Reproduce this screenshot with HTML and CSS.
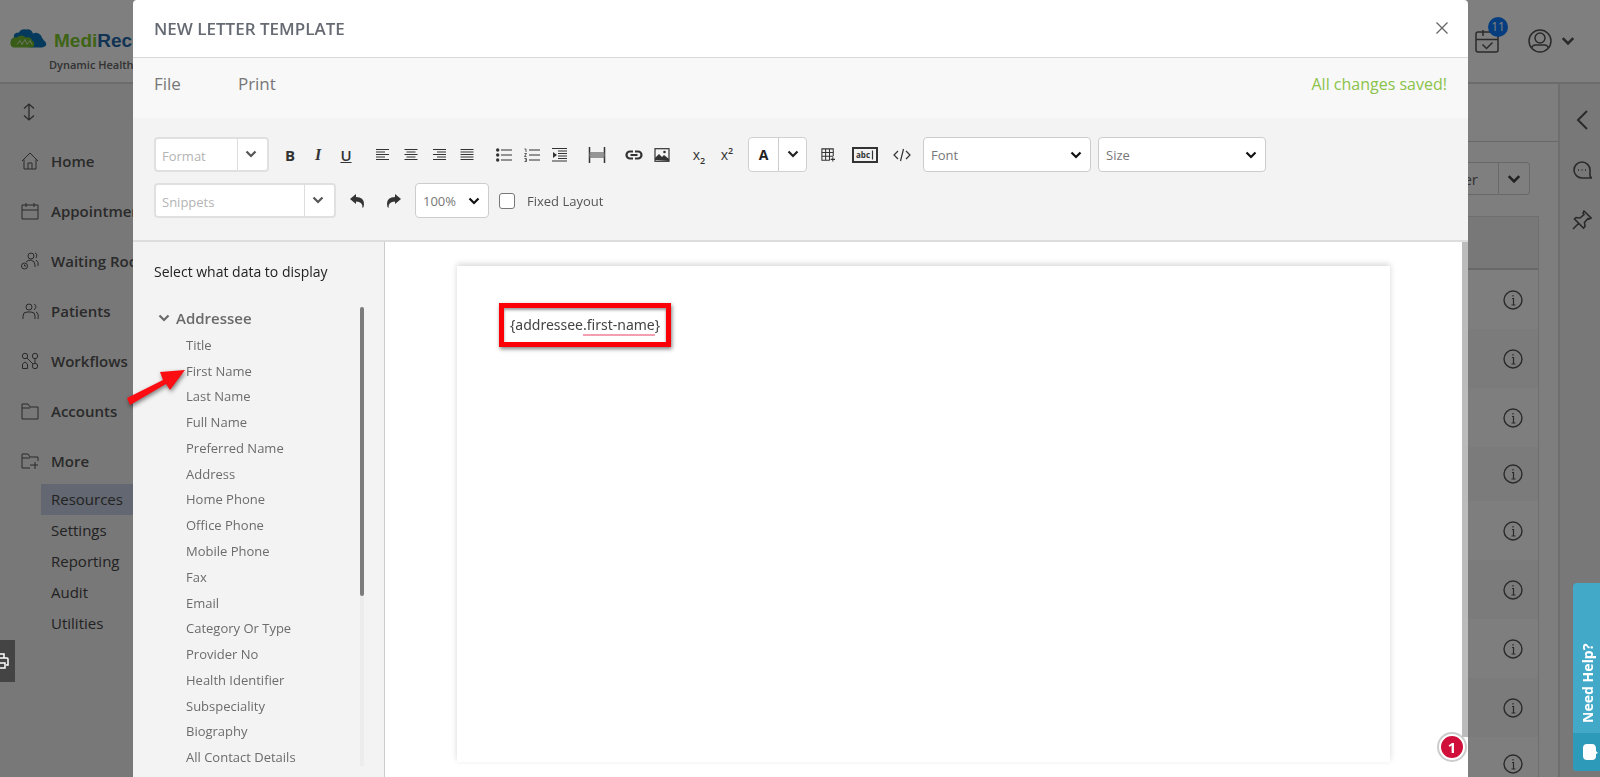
FILE: index.html
```html
<!DOCTYPE html>
<html lang="en">
<head>
<meta charset="utf-8">
<title>New Letter Template</title>
<link rel="stylesheet" href="styles.css">
</head>
<body>
<svg class="defs" width="0" height="0" aria-hidden="true">
  <symbol id="chev" viewBox="0 0 12 12"><path d="M1.5 3.5 6 8l4.500-4.500" fill="none" stroke="currentColor" stroke-width="2.200"/></symbol>
  <symbol id="info" viewBox="0 0 20 20"><circle cx="10" cy="10" r="9" fill="none" stroke="currentColor" stroke-width="1.400"/><path d="M9 8.500h1.500V15M8.500 15h4M10 5v1.500" fill="none" stroke="currentColor" stroke-width="1.200"/></symbol>
</svg>

<div class="app">
  <header class="topbar">
    <div class="brand">
      <svg class="cloud" viewBox="0 0 37 20"><path d="M2 17Q-1 11 4 9 3 4 9 4 11 0 16 1q5-1 7 4 5-2 8 2 1 3 3 5 4 3 1 6l-3 1H22Z" fill="#0a74b8"/><path d="M3 19Q-1 17 1 12q2-4 6-3 4-4 9 0 5-1 6 3 3 1 2 5l-1 2Z" fill="#72b82e"/><path d="m7 16 3-4 2 4 3-5 2 5 3-4 2 4" fill="none" stroke="#d5e8c5"/></svg>
      <span class="brand-name"><b class="green">Medi</b><b class="blue">Reco</b></span>
      <span class="tagline">Dynamic Health</span>
    </div>
    <div class="account">
      <button class="ghost tasks" aria-label="Tasks"><svg width="24" height="24" viewBox="0 0 24 24" fill="none" stroke="currentColor" stroke-width="1.500"><rect x="1" y="3" width="22" height="20" rx="2"/><path d="M1 10.500h22M8 1v6M7.500 15.500l4 4 6-6"/></svg><span class="count">11</span></button>
      <button class="ghost profile" aria-label="Profile"><svg width="24" height="24" viewBox="0 0 24 24" fill="none" stroke="currentColor" stroke-width="1.500"><circle cx="12" cy="12" r="11"/><circle cx="12" cy="9" r="5"/><path d="M3.500 19q1-3 4-3h9q3 0 4 3"/></svg><svg width="14" height="14"><use href="#chev"/></svg></button>
    </div>
  </header>
  <div class="body">
    <nav class="nav">
      <button class="ghost collapse" aria-label="Collapse"><svg width="12" height="18" viewBox="0 0 12 18" fill="none" stroke="currentColor" stroke-width="1.300"><path d="M6 1v16M1 5.500 6 1l5 4.500M1 12.500 6 17l5-4.500"/></svg></button>
      <a href="#"><svg viewBox="0 0 18 18"><path d="M1 9 9 1l8 8M3 7.500V17h12V7.500M7 17v-6h4v6"/></svg>Home</a>
      <a href="#"><svg viewBox="0 0 18 18"><path d="M1 3h16v14H1zM1 8h16M5 1v4M13 1v4"/></svg>Appointments</a>
      <a href="#"><svg viewBox="0 0 18 18"><circle cx="10" cy="4" r="3"/><circle cx="3.500" cy="14" r="3"/><path d="M5 10q2-2 5-2 4 1 4 5v2M14 1q3 1 1 5M15 8q3 2 2 6M3.500 12.500V14H5"/></svg>Waiting Room</a>
      <a href="#"><svg viewBox="0 0 18 18"><circle cx="8" cy="5" r="3"/><path d="M2 17v-3q0-4 4-4h4q4 0 4 4v3M13 2q4 2 0 6M15 10q3 1 2 7"/></svg>Patients</a>
      <a href="#"><svg viewBox="0 0 18 18"><circle cx="4" cy="4" r="2.700"/><circle cx="14" cy="4" r="2.700"/><circle cx="14" cy="14" r="2.700"/><path d="M1.500 12 4 10l2.500 2v4.500h-5zM6 6l6 6M14 7v4"/></svg>Workflows</a>
      <a href="#"><svg viewBox="0 0 18 18"><path d="M1 17V2h6l2 3h8v12ZM1 6h8"/></svg>Accounts</a>
      <a href="#"><svg viewBox="0 0 18 18"><path d="M9 16H1V2h6l2 3h8v4M1 6h8M9 13h8M14 10v7"/></svg>More</a>
      <ul class="subnav">
        <li class="active"><a href="#">Resources</a></li>
        <li><a href="#">Settings</a></li>
        <li><a href="#">Reporting</a></li>
        <li><a href="#">Audit</a></li>
        <li><a href="#">Utilities</a></li>
      </ul>
    </nav>
    <main class="main">
      <div class="main-head"></div>
      <div class="actions"><button class="split-label">New Letter</button><button class="split-arrow" aria-label="More options"><svg width="14" height="14"><use href="#chev"/></svg></button></div>
      <div class="records">
        <div class="rec-head"></div>
        <div class="rec"><svg><use href="#info"/></svg></div>
        <div class="rec"><svg><use href="#info"/></svg></div>
        <div class="rec"><svg><use href="#info"/></svg></div>
        <div class="rec short"><svg><use href="#info"/></svg></div>
        <div class="rec"><svg><use href="#info"/></svg></div>
        <div class="rec"><svg><use href="#info"/></svg></div>
        <div class="rec"><svg><use href="#info"/></svg></div>
        <div class="rec"><svg><use href="#info"/></svg></div>
        <div class="rec short"><svg><use href="#info"/></svg></div>
      </div>
    </main>
    <aside class="rail">
      <button class="ghost" aria-label="Expand"><svg width="20" height="20" viewBox="0 0 20 20" fill="none" stroke="currentColor" stroke-width="2"><path d="M15 1 6 10l9 9"/></svg></button>
      <button class="ghost" aria-label="Messages"><svg width="20" height="20" viewBox="0 0 20 20" fill="none" stroke="currentColor" stroke-width="1.600"><path d="M18 18h-8A8 8 0 1 1 18 10v6l1.500 2ZM6 10h1M9.500 10h1M13 10h1"/></svg></button>
      <button class="ghost" aria-label="Pin"><svg width="20" height="20" viewBox="0 0 20 20" fill="none" stroke="currentColor" stroke-width="1.600"><path d="m12 1 7 7-2 1-1-.500-3.500 4 .500 4-1.500 1.500L2.500 9 4 7.500l4 .500 4-3.500L11 3ZM7 13l-6 6"/></svg></button>
    </aside>
  </div>
</div>

<div class="overlay">
  <section class="modal" role="dialog" aria-label="New letter template">
    <header class="modal-head">
      <h1>NEW LETTER TEMPLATE</h1>
      <button class="ghost" aria-label="Close"><svg width="12" height="12" viewBox="0 0 12 12" stroke="currentColor" stroke-width="1.300"><path d="m.5.500 11 11M11.500.500l-11 11"/></svg></button>
    </header>
    <div class="menu">
      <button class="ghost">File</button>
      <button class="ghost">Print</button>
      <span class="saved">All changes saved!</span>
    </div>
    <div class="toolbar">
      <div class="row">
        <div class="combo format"><input type="text" placeholder="Format" aria-label="Format"><button aria-label="Open formats"><svg><use href="#chev"/></svg></button></div>
        <div class="group">
          <button class="tool glyph bold">B</button><button class="tool glyph italic">I</button><button class="tool glyph under">U</button>
        </div>
        <div class="group">
          <button class="tool" aria-label="Align left"><svg viewBox="0 0 14 14"><path d="M0 1.500h13M0 4h9M0 6.500h13M0 9h9M0 11.500h13"/></svg></button>
          <button class="tool" aria-label="Align centre"><svg viewBox="0 0 14 14"><path d="M.5 1.500h13M2.500 4h9M.5 6.500h13M2.500 9h9M.5 11.500h13"/></svg></button>
          <button class="tool" aria-label="Align right"><svg viewBox="0 0 14 14"><path d="M1 1.500h13M5 4h9M1 6.500h13M5 9h9M1 11.500h13"/></svg></button>
          <button class="tool" aria-label="Justify"><svg viewBox="0 0 14 14"><path d="M.5 1.500h13M.5 4h13M.5 6.500h13M.5 9h13M.5 11.500h13"/></svg></button>
        </div>
        <div class="group">
          <button class="tool" aria-label="Bulleted list"><svg class="w16" viewBox="0 0 16 14"><path d="M5 2h11M5 7h11M5 12h11"/><g fill="currentColor" stroke="none"><circle cx="1.700" cy="2" r="1.700"/><circle cx="1.700" cy="7" r="1.700"/><circle cx="1.700" cy="12" r="1.700"/></g></svg></button>
          <button class="tool" aria-label="Numbered list"><svg class="w16" viewBox="0 0 16 14"><path d="M5 2h11M5 7h11M5 12h11"/><path d="M.5 1H2v3M.5 5.500h2L.5 8.500h2M.5 10.500h2v3h-2M1 12h1" stroke-width=".8"/></svg></button>
          <button class="tool" aria-label="Indent"><svg class="w16" viewBox="0 0 16 14"><path d="M0 .5h15M6 3h9M6 5.500h9M6 8h9M6 10.500h9M0 13h15"/><path d="m1 4 4 3-4 3Z" fill="currentColor" stroke="none"/></svg></button>
        </div>
        <div class="group"><button class="tool" aria-label="Page break"><svg class="w18" viewBox="0 0 18 16"><path d="M1.500 0v16M16.500 0v16" stroke-width="1.500"/><path d="M1.500 6h15M1.500 10h15M1 8h16" stroke-width="1.300" stroke="#777"/></svg></button></div>
        <div class="group">
          <button class="tool" aria-label="Link"><svg class="w18" viewBox="0 0 18 14"><path d="M8 3.500H5a3.500 3.500 0 0 0 0 7h3M10 3.500h3a3.500 3.500 0 0 1 0 7h-3M5.500 7h7" stroke-width="2.200"/></svg></button>
          <button class="tool" aria-label="Image"><svg class="w16" viewBox="0 0 16 14"><rect x="1" y=".7" width="14" height="12.600"/><path d="m1 12 0-2 4-4 3 3 2-2 5 4v2Z" fill="currentColor" stroke="none"/><circle cx="10.500" cy="4" r="1.300" fill="currentColor" stroke="none"/></svg></button>
        </div>
        <div class="group">
          <button class="tool glyph script"><span>x<sub>2</sub></span></button><button class="tool glyph script"><span>x<sup>2</sup></span></button>
        </div>
        <div class="colour"><button>A</button><button aria-label="Text colours"><svg><use href="#chev"/></svg></button></div>
        <button class="tool" aria-label="Table"><svg class="w16" viewBox="0 0 16 16"><path d="M14 9V1H1v13h9M1 5.200h13M1 9.500h13M5.300 1v13M9.700 1v13M13.500 10.500v5M11 13h5"/></svg></button>
        <button class="tool field" aria-label="Text field"><svg class="w26" viewBox="0 0 26 16"><rect x="1" y="1" width="24" height="14" stroke-width="2"/><text x="4" y="11">abc</text><path d="M20.500 3.500v9"/></svg></button>
        <button class="tool" aria-label="Source code"><svg class="w18" viewBox="0 0 18 14"><path d="M5 3 1 7l4 4M13 3l4 4-4 4M10.500 1l-3 12"/></svg></button>
        <div class="drop font"><select aria-label="Font"><option>Font</option></select><svg><use href="#chev"/></svg></div>
        <div class="drop font"><select aria-label="Size"><option>Size</option></select><svg><use href="#chev"/></svg></div>
      </div>
      <div class="row">
        <div class="combo snippets"><input type="text" placeholder="Snippets" aria-label="Snippets"><button aria-label="Open snippets"><svg><use href="#chev"/></svg></button></div>
        <div class="history">
          <button class="tool" aria-label="Undo"><svg viewBox="0 0 14 14"><path d="M0 5 6 0v3q8 0 8 7 0 3-1.500 4Q13 7.500 6 7.500V10Z" fill="currentColor" stroke="none"/></svg></button>
          <button class="tool" aria-label="Redo"><svg viewBox="0 0 14 14"><path d="M14 5 8 0v3Q0 3 0 10q0 3 1.500 4Q1 7.500 8 7.500V10Z" fill="currentColor" stroke="none"/></svg></button>
        </div>
        <div class="drop zoom"><select aria-label="Zoom"><option>100%</option></select><svg><use href="#chev"/></svg></div>
        <label class="fixed"><input type="checkbox">Fixed Layout</label>
      </div>
    </div>
    <div class="work">
      <aside class="picker">
        <h2>Select what data to display</h2>
        <div class="tree">
          <div class="tree-list">
            <button class="ghost branch"><svg width="12" height="12"><use href="#chev"/></svg>Addressee</button>
            <ul>
              <li>Title</li><li>First Name</li><li>Last Name</li><li>Full Name</li><li>Preferred Name</li><li>Address</li><li>Home Phone</li><li>Office Phone</li><li>Mobile Phone</li><li>Fax</li><li>Email</li><li>Category Or Type</li><li>Provider No</li><li>Health Identifier</li><li>Subspeciality</li><li>Biography</li><li>All Contact Details</li>
            </ul>
          </div>
          <div class="track"><div class="thumb"></div></div>
        </div>
      </aside>
      <div class="canvas">
        <article class="paper"><p class="merge">{addressee<span class="typo">.first-name</span>}</p></article>
      </div>
      <div class="canvas-scroll"></div>
    </div>
    <span class="step">1</span>
  </section>
</div>

<svg class="pointer" width="66" height="44" viewBox="0 0 66 44" aria-hidden="true"><path d="M1 32 37 14 34 6l25-2-15 20-4-6L4 39Z" fill="#fb0d12"/></svg>
<button class="side-tab" aria-label="Print queue"><svg width="10" height="18" viewBox="0 0 10 18" fill="none" stroke="#fff" stroke-width="1.500"><path d="M0 2h4v4M0 6h7q1 0 1 1v6H6M0 11h5v5H0"/></svg></button>
<button class="help"><span class="help-text">Need Help?</span><span class="help-icon"><svg width="16" height="18" viewBox="0 0 16 18"><path d="M5 1h5q4 0 4 5v2l2 2-2 1v2q0 4-4 4H5q-4 0-4-4V5q0-4 4-4Z" fill="#fff"/></svg></span></button>
</body>
</html>
```
FILE: styles.css
```css
* { box-sizing: border-box; }
body { margin: 0; height: 100vh; overflow: hidden; font-family: "Open Sans", "Noto Sans", sans-serif; font-size: 13px; color: #444; background: #fff; }
button, input, select { font: inherit; color: inherit; }
button { padding: 0; cursor: pointer; }
a { color: inherit; text-decoration: none; }
ul { list-style: none; margin: 0; padding: 0; }
.defs { position: absolute; }
.ghost { background: none; border: 0; display: flex; align-items: center; }

/* application behind the dialog */
.app { height: 100vh; display: flex; flex-direction: column; overflow: hidden; }
.topbar { height: 84px; flex: none; display: flex; justify-content: space-between; border-bottom: 2px solid #d8d8d8; background: #fff; }
.brand { display: grid; grid-template-columns: 37px auto; column-gap: 7px; align-content: start; padding: 28px 0 0 10px; }
.cloud { width: 37px; height: 21px; }
.brand-name { font: bold 19px/26px "Liberation Sans", sans-serif; }
.green { color: #7cc82c; }
.blue { color: #2266a8; }
.tagline { grid-column: 1 / 3; padding-left: 39px; font-size: 11px; line-height: 22px; font-weight: 600; color: #666; white-space: nowrap; }
.account { display: flex; align-items: center; gap: 29px; padding: 0 25px 0 0; color: #555; }
.tasks { position: relative; }
.count { position: absolute; left: 13px; top: -12px; width: 20px; height: 20px; border-radius: 50%; background: #0a7aff; color: #fff; font-size: 12px; line-height: 20px; text-align: center; }
.profile { gap: 9px; }
.body { flex: 1; min-height: 0; display: flex; }
.nav { width: 220px; flex: none; background: #f0f0f0; padding-left: 21px; font-size: 15px; color: #555; }
.collapse { height: 52px; padding: 4px 0 0 2px; }
.nav > a { display: flex; align-items: center; gap: 12px; height: 50px; font-weight: 600; }
.nav > a svg { width: 18px; height: 18px; fill: none; stroke: currentColor; stroke-width: 1; }
.subnav { padding-left: 20px; margin-top: -2px; color: #444; }
.subnav li { line-height: 31px; padding-left: 10px; }
.subnav .active { background: #c4cfe2; }
.main { flex: 1; min-width: 0; background: #fdfdfd; padding-right: 19px; }
.main-head { height: 58px; border-bottom: 1px solid #d0d0d0; margin-right: -19px; }
.actions { display: flex; justify-content: flex-end; padding: 20px 9px 21px 0; }
.actions button { height: 33px; border: 1px solid #d0d0d0; background: #fff; color: #666; font-size: 15px; }
.split-label { padding: 0 20px; border-radius: 4px 0 0 4px; }
.actions .split-arrow { width: 31px; border-left: 0; border-radius: 0 4px 4px 0; color: #444; display: grid; place-items: center; }
.records { border: 1px solid #ddd; }
.rec-head { height: 53px; background: #f0f0f0; border-bottom: 2px solid #d0d0d0; }
.rec { height: 59px; display: flex; align-items: center; justify-content: flex-end; padding-right: 15px; color: #555; }
.rec.short { height: 54px; }
.rec:nth-child(odd) { background: #f6f6f6; }
.rec svg { width: 20px; height: 20px; }
.rail { width: 42px; flex: none; background: #f0f0f0; border-left: 2px solid #ddd; padding: 26px 0 0 12px; display: flex; flex-direction: column; gap: 30px; color: #555; }

/* dialog */
.overlay { position: fixed; inset: 0; background: rgba(0, 0, 0, .5); padding: 0 132px 0 133px; }
.modal { height: 100%; background: #fff; display: flex; flex-direction: column; border-radius: 4px 4px 0 0; overflow: hidden; position: relative; }
.modal-head { height: 58px; flex: none; display: flex; align-items: center; justify-content: space-between; padding: 0 20px 1px 21px; border-bottom: 1px solid #d8dada; color: #666; }
.modal-head h1 { margin: 0; font-size: 17px; font-weight: 600; color: #666a72; }
.menu { height: 60px; flex: none; display: flex; align-items: center; gap: 57px; padding: 0 21px 9px; background: #f8f8f8; font-size: 17px; color: #777; }
.saved { margin-left: auto; font-size: 16px; color: #8bc34a; }
.toolbar { background: #f3f3f3; border-bottom: 2px solid #ddd; padding: 19px 21px 22px; display: flex; flex-direction: column; gap: 11px; }
.row { display: flex; align-items: center; gap: 7px; }
.group { display: flex; }
.group + .group { margin-left: 2px; }
.combo { display: flex; height: 35px; border: 2px solid #e0e0e0; border-radius: 4px; background: #fff; color: #555; }
.combo input { flex: 1; min-width: 0; border: 0; background: none; padding: 3px 0 0 6px; outline: 0; }
.combo input::placeholder { color: #b4b4b4; }
.combo button { width: 30px; border: 0; border-left: 1px solid #ddd; background: none; padding-right: 4px; }
.combo svg, .colour svg, .drop svg { width: 12px; height: 12px; }
.format { width: 115px; }
.snippets { width: 182px; }
.tool { width: 28px; height: 32px; border: 0; background: none; display: grid; place-items: center; color: #333; }
.tool svg { width: 14px; height: 14px; fill: none; stroke: currentColor; stroke-width: 1.200; overflow: visible; }
.tool .w16 { width: 16px; }
.tool .w18 { width: 18px; height: 16px; }
.tool .w26 { width: 26px; height: 16px; }
.field { width: 32px; }
.field text { font: bold 8px "Open Sans", sans-serif; fill: currentColor; stroke: none; }
.glyph { font-size: 15px; }
.bold { font-weight: 700; }
.italic { font-family: "Liberation Serif", serif; font-style: italic; font-weight: 700; font-size: 16px; }
.under { font-weight: 600; text-decoration: underline; }
.script { font-size: 14px; line-height: 20px; }
.script sub, .script sup { font-size: 9px; line-height: 0; font-weight: 600; }
.colour { display: flex; height: 35px; border: 1px solid #d0d0d0; border-radius: 4px; background: #fff; color: #222; }
.colour button { width: 29px; border: 0; background: none; font-size: 14px; font-weight: 700; }
.colour button + button { width: 28px; border-left: 1px solid #ccc; }
.drop { display: grid; align-items: center; height: 35px; }
.drop select { grid-area: 1 / 1; width: 100%; height: 100%; appearance: none; border: 1px solid #ccc; border-radius: 4px; background: #fff; padding: 0 7px; color: #777; }
.drop svg { grid-area: 1 / 1; justify-self: end; margin-right: 9px; pointer-events: none; color: #111; }
.font { width: 168px; }
.zoom { width: 74px; }
.history { display: flex; gap: 9px; }
.fixed { display: flex; align-items: center; gap: 12px; padding-left: 3px; color: #555; }
.fixed input { appearance: none; width: 16px; height: 16px; margin: 0; border: 1px solid #777; border-radius: 3px; background: #fff; }
.work { flex: 1; min-height: 0; display: flex; }
.picker { width: 252px; flex: none; background: #f3f3f3; border-right: 1px solid #ccc; padding: 20px 20px 7px 21px; display: flex; flex-direction: column; }
.picker h2 { margin: 0; font-size: 14px; line-height: 20px; font-weight: 400; color: #222; }
.tree { flex: 1; min-height: 0; margin-top: 22px; display: flex; justify-content: space-between; }
.tree-list { display: flex; flex-direction: column; }
.branch { height: 28px; padding: 0 0 0 4px; gap: 6px; font-size: 15px; font-weight: 600; color: #6a6a6a; }
.tree-list ul { flex: 1; display: flex; flex-direction: column; padding-left: 32px; font-size: 13px; color: #6c6c6c; }
.tree-list li { flex: 1; display: flex; align-items: center; }
.track { width: 4px; margin: 3px 0 4px; background: #ececec; }
.thumb { height: 63%; background: #7c7c7c; border-radius: 2px; }
.canvas { flex: 1; min-width: 0; padding: 24px 72px 15px; overflow: hidden; }
.paper { height: 100%; background: #fff; box-shadow: 0 -2px 6px rgba(0, 0, 0, .16); padding: 49px 53px; }
.merge { position: relative; display: inline-block; margin: 0; font: 14px/20px "Noto Sans", sans-serif; color: #444; }
.merge::after { content: ""; position: absolute; inset: -12px -11px; border: 5px solid #fb0007; box-shadow: 1px 2px 4px rgba(0, 0, 0, .5), inset 0 2px 3px rgba(0, 0, 0, .4); }
.typo { border-bottom: 2px solid #f2a0b0; }
.canvas-scroll { width: 6px; margin-bottom: 40px; background: #bbb; }
.step { position: absolute; right: 3px; bottom: 17px; width: 26px; height: 26px; border: 2px solid #fff; border-radius: 50%; background: #d0103a; box-shadow: 0 0 0 2px #ccc; color: #fff; font-size: 15px; font-weight: 700; line-height: 22px; text-align: center; }

/* floating widgets */
.pointer { position: fixed; left: 126px; top: 366px; filter: drop-shadow(1px 2px 2px rgba(0, 0, 0, .5)); }
.side-tab { position: fixed; left: 0; bottom: 95px; width: 15px; height: 42px; border: 0; background: #444; display: flex; align-items: center; }
.help { position: fixed; right: 0; bottom: 6px; width: 27px; height: 188px; border: 0; border-radius: 4px 0 0 4px; overflow: hidden; display: flex; flex-direction: column; background: #42a9c9; color: #fff; }
.help-text { flex: 1; width: 27px; writing-mode: vertical-rl; transform: rotate(180deg); text-align: left; padding: 10px 2px 0 0; font: 700 14px/25px "Noto Sans", sans-serif; }
.help-icon { width: 27px; height: 38px; background: #2d9ab9; display: grid; place-items: center; padding-left: 6px; }
```
